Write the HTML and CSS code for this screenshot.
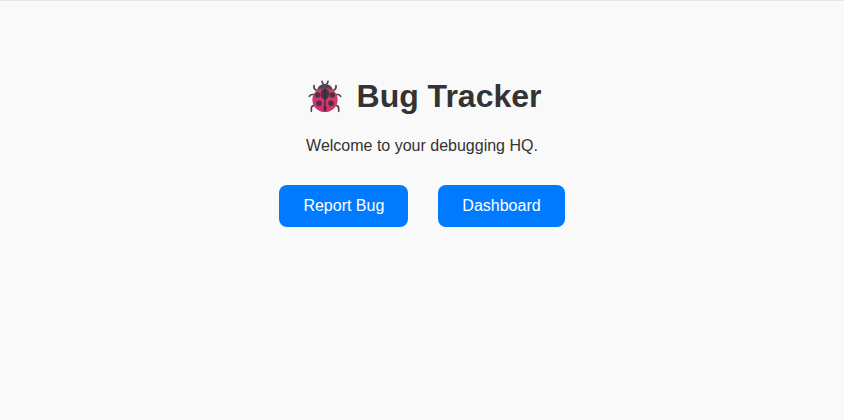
FILE: index.html
```html
<!DOCTYPE html>
<html lang="en">
<head>
<meta charset="utf-8">
<title>Bug Tracker</title>
<link rel="stylesheet" href="styles.css">
</head>
<body>
<main class="home">
<h1 class="title"><svg class="bug" viewBox="24 28 102 102" aria-hidden="true">
<defs><linearGradient id="shell" x1="0" y1="1" x2="1" y2="0"><stop offset="0" stop-color="#c8307c"/><stop offset="1" stop-color="#dc3f55"/></linearGradient></defs>
<g fill="none" stroke="#504358" stroke-width="5" stroke-linecap="round" stroke-linejoin="round">
<path d="M66 32Q67 39 72 42M84 32Q83 39 78 42M42 45Q40 54 49 59M108 45Q110 54 101 59M28 77Q32 70 42 72M122 77Q118 70 108 72M34 122V113Q34 106 42 104M116 122V113Q116 106 108 104"/>
</g>
<ellipse cx="75" cy="87" rx="38" ry="37" fill="url(#shell)"/>
<path d="M51 58Q56 40 75 40Q94 40 99 58Q88 52 75 54Q62 52 51 58Z" fill="#504358"/>
<g fill="#493448"><ellipse cx="75" cy="70" rx="13" ry="16"/><circle cx="53" cy="73" r="8"/><circle cx="97" cy="73" r="8"/><circle cx="57" cy="98" r="8.500"/><circle cx="93" cy="98" r="8.500"/><ellipse cx="75" cy="113" rx="5" ry="7"/></g>
<path d="M75 54V122" stroke="#34283a" stroke-width="3.500"/>
</svg><span>Bug Tracker</span></h1>
<p class="welcome">Welcome to your debugging HQ.</p>
<nav class="actions"><a class="button">Report Bug</a><a class="button">Dashboard</a></nav>
</main>
</body>
</html>
```

FILE: styles.css
```css
* { box-sizing: border-box; }
body { margin: 0; min-height: 420px; border-top: 1px solid #e8e8e8; background: #f9f9f9; color: #333; font: 16px/18px "Liberation Sans", Arial, sans-serif; }
.home { padding-top: 77px; text-align: center; }
.title { display: flex; justify-content: center; align-items: center; gap: 15px; margin: 0; padding-left: 5px; height: 37px; font-size: 32px; line-height: 37px; }
.bug { width: 34px; height: 34px; }
.welcome { margin: 22px 0 0; }
.actions { display: flex; justify-content: center; gap: 30px; margin-top: 30px; }
.button { padding: 12px 24px; border-radius: 8px; background: #007bff; color: #fff; }
```
